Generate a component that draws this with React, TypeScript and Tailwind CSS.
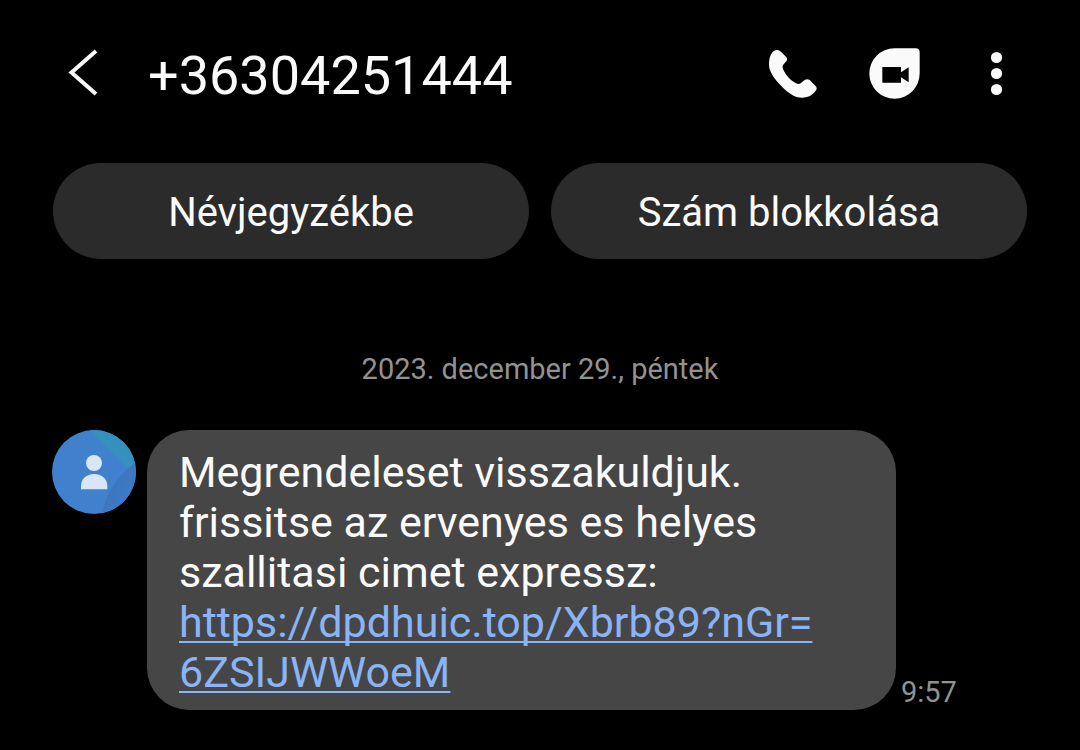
import React from 'react';

const ConversationHeader = () => {
  return (
    <header className="flex h-24 items-center px-16">
      <button type="button" aria-label="Vissza" className="flex h-12 w-10 items-center justify-center">
        <svg viewBox="0 0 40 48" className="h-12 w-10" fill="none" stroke="#fafafa" strokeWidth="4">
          <path d="M32 2 7.500 23.500 32 45" />
        </svg>
      </button>
      <h1 className="ml-11 flex-1 pt-1.5 text-[54px] leading-16">+36304251444</h1>
      <div className="flex items-center">
        <button type="button" aria-label="Hívás">
          <svg viewBox="50 38 150 150" className="size-[50px]" fill="#fafafa">
            <path d="M56 90C56 70 60 54 72 46Q81 41 90 48L107 64Q113 71 108 78L100 87Q95 93 98 101C106 120 121 135 137 144Q145 148 152 143L162 135Q170 129 178 134L195 151Q202 158 197 165C188 179 175 187 155 187C137 187 119 177 101 160C78 139 56 111 56 90Z" />
          </svg>
        </button>
        <button type="button" aria-label="Videohívás" className="ml-[51px]">
          <svg viewBox="39 36 156 156" className="size-[52px]">
            <path d="M118 40H182Q194 40 194 52V115A75.500 75.500 0 1 1 118 40Z" fill="#fafafa" />
            <path d="M82 96H138V112L161 97V142L138 127V143H82Z" fill="#000" />
          </svg>
        </button>
        <button type="button" aria-label="További lehetőségek" className="ml-14">
          <svg viewBox="0 0 40 50" className="h-[50px] w-10" fill="#fafafa">
            <circle cx="20.500" cy="9.500" r="5.600" />
            <circle cx="20.500" cy="25.500" r="5.600" />
            <circle cx="20.500" cy="41.500" r="5.600" />
          </svg>
        </button>
      </div>
    </header>
  );
};

const Avatar = () => {
  return (
    <svg viewBox="0 0 252 252" className="size-21 shrink-0" aria-hidden="true">
      <defs>
        <clipPath id="avatar-circle">
          <circle cx="126" cy="126" r="126" />
        </clipPath>
        <linearGradient id="avatar-shade" x1="0" y1="0" x2="1" y2="1">
          <stop offset="0" stopColor="#3870b8" />
          <stop offset="1" stopColor="#417fc9" />
        </linearGradient>
      </defs>
      <g clipPath="url(#avatar-circle)">
        <path d="M0 0h252v252H0Z" fill="#4080cd" />
        <path d="M112 0 229 117 252 98V0Z" fill="#3690bd" />
        <path d="M252 97C201 133 163 183 150 252h102Z" fill="url(#avatar-shade)" />
      </g>
      <circle cx="126" cy="99" r="24" fill="#d9e6f5" />
      <path d="M87 178v-10c0-48 79-48 79 0v10Z" fill="#d9e6f5" />
    </svg>
  );
};

const App = () => {
  return (
    <div className="min-h-screen bg-black pt-[25px] font-['Roboto',sans-serif] text-[#fafafa]">
      <ConversationHeader />
      <div className="mt-[42px] grid grid-cols-2 gap-[22px] px-[53px]">
        <button type="button" className="h-24 rounded-full bg-[#2b2b2b] pt-1 text-[40px]">Névjegyzékbe</button>
        <button type="button" className="h-24 rounded-full bg-[#2b2b2b] pt-1 text-[40px]">Szám blokkolása</button>
      </div>
      <main className="px-[52px] pt-[90px]">
        <p className="text-center text-[29px] leading-10 text-[#929292]">2023. december 29., péntek</p>
        <div className="mt-[41px] flex">
          <Avatar />
          <div className="ml-[11px] w-[749px] rounded-[42px] bg-[#464646] px-8 pt-[17px] pb-[13px] text-[43px] leading-[50px]">
            <p>Megrendeleset visszakuldjuk. frissitse az ervenyes es helyes szallitasi cimet expressz:</p>
            <a href="#" className="text-[#8ab4f8] underline decoration-2 underline-offset-4 [text-decoration-skip-ink:none]">
              https://dpdhuic.top/Xbrb89?nGr=<wbr />6ZSIJWWoeM
            </a>
          </div>
          <time className="ml-[5px] self-end text-[29px] leading-9 text-[#929292]">9:57</time>
        </div>
      </main>
    </div>
  );
};

export default App;
